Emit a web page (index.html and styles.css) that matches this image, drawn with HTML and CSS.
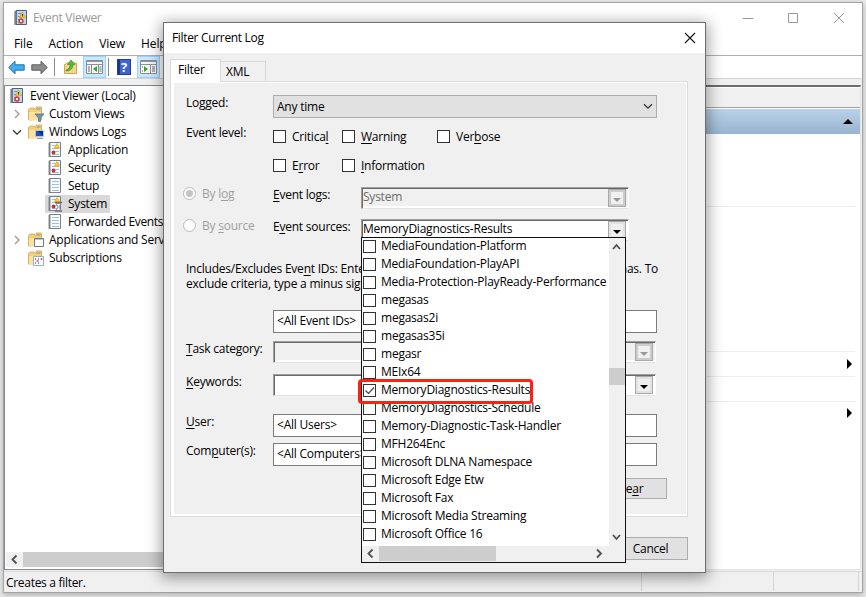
FILE: index.html
```
<!DOCTYPE html>
<html lang="en">
<head>
    <meta charset="UTF-8">
    <title>Event Viewer</title>
    <link rel="stylesheet" href="styles.css">
</head>
<body>
    <!-- icons -->
    <svg class="defs" width="0" height="0">
        <symbol id="i-book" viewBox="0 0 16 16">
            <path d="M3 .5h10.500v14H3z" fill="#bcd6f0" stroke="#4d6285"/>
            <path d="M5 3.500h4M5 6.500h3M5 9.500h2M5 12.500h2" stroke="#7793b5"/>
            <path d="M1 2h3M1 4h3M1 6h3M1 8h3M1 10h3M1 12h3M1 14h3" stroke="#555"/>
            <path d="M9.500 2l3 5.500h-6z" fill="#fbd12c" stroke="#c39a14" stroke-width=".6"/>
            <path d="M9.500 4v2.500" stroke="#333"/>
            <circle cx="8" cy="11" r="2.700" fill="#d5402f"/>
            <path d="M7 10l2 2M9 10l-2 2" stroke="#fff" stroke-width=".9"/>
        </symbol>
        <symbol id="i-page" viewBox="0 0 16 16">
            <path d="M2.500 .5h11v14h-11z" fill="#f8fbfd" stroke="#77818d"/>
            <path d="M5 3.500h7M5 6.500h7M5 9.500h7M5 12.500h7" stroke="#a3bdd3"/>
            <path d="M1 2h3M1 4h3M1 6h3M1 8h3M1 10h3M1 12h3M1 14h3" stroke="#777" stroke-width=".8"/>
        </symbol>
        <symbol id="i-log" viewBox="0 0 16 16">
            <use href="#i-page"/>
            <path d="M10 1.500l2.600 4.500H7.400z" fill="#fbd12c" stroke="#d2a313" stroke-width=".6"/>
            <circle cx="6.500" cy="10.500" r="1.900" fill="#c43434"/>
        </symbol>
        <symbol id="i-system" viewBox="0 0 16 16">
            <use href="#i-log"/>
            <path d="M8 6.500h7M8 15h7" stroke="#a35b31" stroke-width="1.400"/>
            <path d="M9 7.500h5L12 11l2 3.500H9l2-3.500z" fill="#e4f4ff" stroke="#5687b1" stroke-width=".8"/>
        </symbol>
        <symbol id="i-folder" viewBox="0 0 16 16">
            <path d="M.5 14V3.500L2 2h4l1.500 1.500H8V1h5.500v12.500z" fill="#f3cf79" stroke="#d2a548" stroke-width=".8"/>
            <path d="M1 6h12v8H1z" fill="#fbe2a0"/>
            <path d="M9 3h3.500" stroke="#5b9bd5"/>
        </symbol>
        <symbol id="i-back" viewBox="0 0 17 15">
            <path d="M.8 7.500L7 1.200v3.600h9.200v5.400H7v3.600z"/>
        </symbol>
        <symbol id="i-forward" viewBox="0 0 17 15">
            <path d="M16.200 7.500L10 1.200v3.600H.8v5.400H10v3.600z"/>
        </symbol>
        <symbol id="i-right" viewBox="0 0 8 10"><path d="M2 1l4 4-4 4" fill="none" stroke="currentColor" stroke-width="1.300"/></symbol>
        <symbol id="i-down" viewBox="0 0 10 7"><path d="M1 1.200l4 4 4-4" fill="none" stroke="currentColor" stroke-width="1.300"/></symbol>
    </svg>

    <div class="window">
        <div class="title-bar">
            <svg class="title-icon" width="16" height="16"><use href="#i-book"/></svg>
            <span>Event Viewer</span>
            <svg class="win-btns" width="104" height="12" fill="none" stroke="#999">
                <path d="M0 6.500h10M45.500 1.500h9v9h-9zM91 1l10 10M101 1L91 11"/>
            </svg>
        </div>
        <div class="menu">
            <span>File</span><span>Action</span><span>View</span><span>Help</span>
        </div>
        <div class="toolbar">
            <svg class="t-back" width="17" height="15" fill="#3fb0ec" stroke="#2b6fa8"><use href="#i-back"/></svg>
            <svg class="t-forward" width="17" height="15" fill="#8b8b8b" stroke="#5f5f5f"><use href="#i-forward"/></svg>
            <i class="sep"></i>
            <svg class="t-folder" width="16" height="16" viewBox="0 0 16 16">
                <path d="M1.500 14.500v-9h1l1-1.500h10v10.500z" fill="#f5d78c" stroke="#d0a54c"/>
                <path d="M3 11C6 10 7 8.500 7 5.500H4.500L8 1l4 4.500h-2C10 9.500 7.500 12 3 12z" fill="#4fbd38" stroke="#2a8520" stroke-width=".6"/>
            </svg>
            <span class="t-on">
                <svg width="17" height="14" viewBox="0 0 17 14">
                    <path d="M.5 .5h16v13H.5z" fill="#f7f7f7" stroke="#888e96"/>
                    <path d="M1 1.500h15M1 4.500h15" stroke="#8d949c"/>
                    <path d="M5.500 5v8M12.500 5v8" stroke="#888e96"/>
                    <path d="M2 7h2M2 9h2M2 11h2M13.500 7h2M13.500 9h2M13.500 11h2" stroke="#668"/>
                    <path d="M11 6v6L7 9z" fill="#37a528"/>
                </svg>
            </span>
            <i class="sep sep-near"></i>
            <span class="t-help">?</span>
            <span class="t-on">
                <svg width="17" height="14" viewBox="0 0 17 14">
                    <path d="M.5 .5h16v13H.5z" fill="#f7f7f7" stroke="#888e96"/>
                    <path d="M1 1.500h15M1 4.500h15" stroke="#8d949c"/>
                    <path d="M10.500 5v8" stroke="#888e96"/>
                    <path d="M12 7h3M12 9h3M12 11h3M2 7h1M2 11h1" stroke="#668"/>
                    <path d="M4 6v6l4-3z" fill="#37a528"/>
                </svg>
            </span>
        </div>
        <div class="main">
            <div class="tree-pane">
                <ul class="tree">
                    <li class="root"><svg class="ico" width="16" height="16"><use href="#i-book"/></svg><span>Event Viewer (Local)</span></li>
                    <li class="l1">
                        <svg class="tog" width="8" height="10"><use href="#i-right"/></svg>
                        <svg class="ico" width="17" height="16" viewBox="0 0 17 16"><use href="#i-folder" width="16" height="16"/><path d="M7 8h9l-3.500 4v3.500h-2V12z" fill="#7594ad" stroke="#49657d" stroke-width=".7"/></svg>
                        <span>Custom Views</span>
                    </li>
                    <li class="l1">
                        <svg class="tog open" width="10" height="7"><use href="#i-down"/></svg>
                        <svg class="ico" width="17" height="16" viewBox="0 0 17 16"><use href="#i-folder" width="16" height="16"/><path d="M7.500 6.500h8v6h-8z" fill="#1d4fc4" stroke="#b8c6d6"/><path d="M10 7h5v5z" fill="#0a2d8c"/><path d="M9 14.500h6" stroke="#8a98a8"/></svg>
                        <span>Windows Logs</span>
                    </li>
                    <li class="l2"><svg class="ico" width="16" height="16"><use href="#i-log"/></svg><span>Application</span></li>
                    <li class="l2"><svg class="ico" width="16" height="16"><use href="#i-log"/></svg><span>Security</span></li>
                    <li class="l2"><svg class="ico" width="16" height="16"><use href="#i-page"/></svg><span>Setup</span></li>
                    <li class="l2 on"><svg class="ico" width="16" height="16"><use href="#i-system"/></svg><span>System</span></li>
                    <li class="l2 tight"><svg class="ico" width="16" height="16"><use href="#i-page"/></svg><span>Forwarded Events</span></li>
                    <li class="l1">
                        <svg class="tog" width="8" height="10"><use href="#i-right"/></svg>
                        <svg class="ico" width="17" height="16" viewBox="0 0 17 16"><use href="#i-folder" width="16" height="16"/><path d="M6.500 6.500h9v8h-9z" fill="#fff" stroke="#6d7d8d"/><path d="M7 7.500h8" stroke="#b8c8d8"/></svg>
                        <span>Applications and Services Logs</span>
                    </li>
                    <li class="l1">
                        <i class="tog"></i>
                        <svg class="ico" width="17" height="16" viewBox="0 0 17 16"><use href="#i-folder" width="16" height="16"/><path d="M5.500 6.500h10v9h-10z" fill="#fff" stroke="#9aabbb"/><path d="M7 9h1M10 9h1M7 13h1M10 13h1" stroke="#346fc0" stroke-width="1.500"/><path d="M12.500 9h2M8.500 11h2" stroke="#d14a3d" stroke-width="1.500"/></svg>
                        <span>Subscriptions</span>
                    </li>
                </ul>
                <div class="h-scroll">
                    <svg width="17" height="15" fill="none" stroke="#505050" stroke-width="1.800"><path d="M10.500 3.500l-4 4 4 4"/></svg>
                    <i></i>
                </div>
            </div>
            <div class="actions">
                <div class="actions-head"></div>
                <div class="actions-title"><i class="tri-up"></i></div>
                <div class="act a1"></div>
                <div class="act a2"></div>
                <div class="act a3"><i class="tri-right"></i></div>
                <div class="act a4"></div>
                <div class="act a5"><i class="tri-right"></i></div>
            </div>
        </div>
        <div class="status"><span>Creates a filter.</span><i></i><i></i></div>
    </div>

    <div class="dialog">
        <div class="dialog-title">
            <span>Filter Current Log</span>
            <svg width="12" height="12" stroke="#111" stroke-width="1.100"><path d="M1 1l10 10M11 1L1 11"/></svg>
        </div>
        <div class="tabs">
            <span class="tab active">Filter</span><span class="tab">XML</span>
        </div>
        <div class="panel">
            <div class="form">
                <div class="row r-logged">
                    <label>Lo<u>g</u>ged:</label>
                    <div class="select"><span>Any time</span><svg width="10" height="7"><use href="#i-down"/></svg></div>
                </div>
                <div class="row r-level">
                    <label>Event level:</label>
                    <div class="checks">
                        <span><i class="box"></i>Critica<u>l</u></span>
                        <span><i class="box"></i><u>W</u>arning</span>
                        <span><i class="box"></i>Ver<u>b</u>ose</span>
                        <span><i class="box"></i>E<u>r</u>ror</span>
                        <span class="w-info"><i class="box"></i><u>I</u>nformation</span>
                    </div>
                </div>
                <div class="row r-source">
                    <label class="radio"><i class="on"></i><span>By l<u>o</u>g</span></label>
                    <label class="sub"><u>E</u>vent logs:</label>
                    <div class="combo off"><span>System</span><b></b></div>
                </div>
                <div class="row r-source r-source2">
                    <label class="radio"><i></i><span>By <u>s</u>ource</span></label>
                    <label class="sub">E<u>v</u>ent sources:</label>
                    <div class="combo"><span>MemoryDiagnostics-Results</span><b></b></div>
                </div>
                <div class="note">
                    <p><span>Includes/Excludes Eve<u>n</u>t IDs: Enter ID</span><span>commas. To</span></p>
                    <p><span>exclude criteria, type a minus sign first.</span></p>
                </div>
                <div class="row r-ids"><label></label><div class="input">&lt;All Event IDs&gt;</div></div>
                <div class="row r-task"><label><u>T</u>ask category:</label><div class="combo wide off"><span></span><b></b></div></div>
                <div class="row r-key"><label><u>K</u>eywords:</label><div class="combo wide"><span></span><b></b></div></div>
                <div class="row r-user"><label><u>U</u>ser:</label><div class="input">&lt;All Users&gt;</div></div>
                <div class="row r-comp"><label>Com<u>p</u>uter(s):</label><div class="input">&lt;All Computers&gt;</div></div>
                <div class="btn clear"><span>Cle<u>a</u>r</span></div>
            </div>
        </div>
        <div class="btn cancel"><span>Cancel</span></div>

        <!-- event sources list -->
        <div class="drop">
            <ul>
                <li><i class="box"></i>MediaFoundation-Platform</li>
                <li><i class="box"></i>MediaFoundation-PlayAPI</li>
                <li><i class="box"></i>Media-Protection-PlayReady-Performance</li>
                <li><i class="box"></i>megasas</li>
                <li><i class="box"></i>megasas2i</li>
                <li><i class="box"></i>megasas35i</li>
                <li><i class="box"></i>megasr</li>
                <li><i class="box"></i>MEIx64</li>
                <li><i class="box"><svg width="11" height="11" fill="none" stroke="#444" stroke-width="1.200"><path d="M1.500 5.500l3 3 5.500-6"/></svg></i>MemoryDiagnostics-Results</li>
                <li><i class="box"></i>MemoryDiagnostics-Schedule</li>
                <li><i class="box"></i>Memory-Diagnostic-Task-Handler</li>
                <li><i class="box"></i>MFH264Enc</li>
                <li><i class="box"></i>Microsoft DLNA Namespace</li>
                <li><i class="box"></i>Microsoft Edge Etw</li>
                <li><i class="box"></i>Microsoft Fax</li>
                <li><i class="box"></i>Microsoft Media Streaming</li>
                <li><i class="box"></i>Microsoft Office 16</li>
            </ul>
            <div class="v-bar">
                <svg width="16" height="17" fill="none" stroke="#505050" stroke-width="1.800"><path d="M4 11l3.500-4 3.500 4"/></svg>
                <i></i>
                <svg width="16" height="17" fill="none" stroke="#505050" stroke-width="1.800"><path d="M4 6l3.500 4L11 6"/></svg>
            </div>
            <div class="h-bar">
                <svg width="17" height="15" fill="none" stroke="#505050" stroke-width="1.800"><path d="M10.500 3.500l-4 4 4 4"/></svg>
                <i></i>
                <svg width="17" height="15" fill="none" stroke="#505050" stroke-width="1.800"><path d="M6 3.500l4 4-4 4"/></svg>
            </div>
        </div>
        <div class="mark"></div>
    </div>
</body>
</html>
```
FILE: styles.css
```
*{
    margin: 0;
    padding: 0;
    box-sizing: border-box;
}
body{
    width: 866px;
    height: 597px;
    overflow: hidden;
    background-color: #e9e9e9;
    font: 12px/16px "Open Sans", "Noto Sans", sans-serif;
    letter-spacing: -0.23px;
    color: #000;
    white-space: nowrap;
}
ul{
    list-style: none;
}
svg{
    display: block;
    flex: none;
}
u{
    text-underline-offset: 2px;
    text-decoration-thickness: 1px;
}
.defs{
    position: absolute;
}

/* main window */
.window{
    display: flex;
    flex-direction: column;
    width: 860px;
    height: 591px;
    margin: 2px 0 0 3px;
    border: 1px solid #a3a3a3;
    background-color: #f0f0f0;
    box-shadow: 0 2px 6px rgba(0,0,0,.25);
}
.title-bar{
    display: flex;
    align-items: center;
    height: 30px;
    padding: 0 15px 0 9px;
    background-color: #fff;
    color: #999;
}
.title-bar span{
    letter-spacing: -.3px;
}
.title-icon{
    margin-right: 4px;
}
.win-btns{
    margin-left: auto;
}
.menu{
    display: flex;
    gap: 16px;
    height: 22px;
    padding: 3px 0 0 10px;
    background-color: #fff;
    letter-spacing: -.1px;
}
.toolbar{
    display: flex;
    align-items: center;
    height: 24px;
    padding-left: 4px;
    background-color: #fff;
    border-top: 1px solid #b0b0b4;
    border-bottom: 1px solid #d5d5d5;
}
.t-forward{
    margin-left: 6px;
}
.sep{
    width: 1px;
    height: 18px;
    margin: 0 8px 0 6px;
    background-color: #8b8b8b;
}
.sep-near{
    margin: 0 8px 0 2px;
}
.t-on{
    display: flex;
    align-items: center;
    justify-content: center;
    width: 23px;
    height: 22px;
    margin-left: 4px;
    background-color: #cce8ff;
    border: 1px solid #99d1ff;
}
.t-help{
    width: 14px;
    height: 16px;
    margin-right: 2px;
    background: linear-gradient(90deg, #1d3689 2px, #3f66cc 2px);
    border: 1px solid #203c8d;
    color: #fff;
    font-weight: bold;
    font-size: 13px;
    line-height: 14px;
    text-align: center;
}
.main{
    display: flex;
    justify-content: space-between;
    height: 485px;
    margin-top: 6px;
}

/* tree */
.tree-pane{
    display: flex;
    flex-direction: column;
    justify-content: space-between;
    width: 300px;
    padding: 1px 0 2px 1px;
    background-color: #fff;
    border: 1px solid #828790;
}
.tree li{
    display: flex;
    align-items: center;
    height: 18px;
}
.tree .root{
    padding-left: 3px;
    letter-spacing: -.28px;
}
.tree .root span{
    padding-left: 5px;
}
.tree .l1{
    padding-left: 6px;
}
.tog{
    width: 8px;
    margin: 0 8px 0 1px;
    color: #999;
}
.tog.open{
    width: 10px;
    margin: 0 7px 0 0;
    color: #333;
}
.l1 .ico{
    margin: 0 4px 0 -1px;
}
.l2{
    width: max-content;
    margin-left: 39px;
    padding: 0 3px 0 2px;
}
.l2 span{
    padding-left: 5px;
}
.l2.tight{
    letter-spacing: -.33px;
}
.l2.on{
    background-color: #d9d9d9;
}
.h-scroll{
    display: flex;
    height: 15px;
    background-color: #f0f0f0;
}
.h-scroll i{
    width: 200px;
    background-color: #cdcdcd;
}

/* actions on the right */
.actions{
    width: 240px;
    margin-right: 1px;
    background-color: #fff;
    border-top: 2px solid #6c6c6c;
    border-right: 1px solid #e3e3e3;
    border-bottom: 1px solid #e3e3e3;
}
.actions-head{
    height: 21px;
    border-top: 1px solid #fff;
    border-bottom: 1px solid #a0a0a0;
    background-color: #f0f0f0;
}
.actions-title{
    display: flex;
    align-items: center;
    justify-content: flex-end;
    height: 25px;
    margin-top: 1px;
    padding-right: 7px;
    background: linear-gradient(#b9d1ea, #99b4d1);
}
.tri-up{
    border: 5px solid transparent;
    border-top: 0;
    border-bottom-color: #000;
}
.act{
    display: flex;
    align-items: center;
    justify-content: flex-end;
    height: 25px;
    margin-right: 5px;
    padding-right: 3px;
    border-bottom: 1px solid #ededed;
}
.a1{
    height: 73px;
}
.a2{
    height: 145px;
}
.a5{
    height: 23px;
    border-bottom: 0;
}
.tri-right{
    margin-bottom: 1px;
    border: 5px solid transparent;
    border-right: 0;
    border-left-color: #000;
}
.status{
    display: flex;
    height: 21px;
    margin-top: 1px;
    padding: 0 3px 1px 2px;
    border-top: 1px solid #d9d9d9;
}
.status span{
    width: 636px;
    line-height: 21px;
    letter-spacing: -.3px;
}
.status i{
    height: 19px;
    width: 133px;
    border-left: 1px solid #d5d5d5;
}
.status i:last-child{
    width: 86px;
    border-right: 1px solid #d5d5d5;
}

/* filter dialog */
.dialog{
    position: absolute;
    top: 22px;
    left: 163px;
    width: 543px;
    height: 551px;
    border: 1px solid #6e6e6e;
    background-color: #f0f0f0;
    box-shadow: 0 3px 14px 2px rgba(0,0,0,.38);
}
.dialog-title{
    display: flex;
    align-items: center;
    justify-content: space-between;
    height: 30px;
    padding: 0 9px 1px 8px;
    background-color: #fff;
}
.dialog-title span{
    padding-top: 1px;
    letter-spacing: -.33px;
}
.tabs{
    display: flex;
    align-items: flex-end;
    height: 29px;
    padding: 6px 0 0 6px;
}
.tab{
    width: 45px;
    height: 21px;
    padding: 2px 5px;
    border: 1px solid #d9d9d9;
    border-width: 1px 1px 0 0;
}
.tab.active{
    width: 51px;
    height: 23px;
    padding: 2px 0 0 7px;
    border-width: 1px 1px 0 1px;
    background-color: #fff;
}
.panel{
    width: 518px;
    height: 436px;
    margin: -1px 0 0 6px;
    padding: 1px 1px 2px 3px;
    background-color: #fff;
    border: 1px solid #dcdcdc;
}
.form{
    display: flex;
    flex-direction: column;
    height: 431px;
    padding: 12px 28px 0 12px;
    background-color: #f0f0f0;
}
.row{
    display: flex;
    height: 23px;
}
.row label{
    width: 87px;
    flex: none;
}
.select{
    display: flex;
    align-items: center;
    justify-content: space-between;
    width: 384px;
    height: 23px;
    padding: 0 3px;
    background-color: #e1e1e1;
    border: 1px solid #adadad;
    color: #333;
}
.select span{
    color: #000;
}
.r-level{
    height: 57px;
    margin-top: 7px;
}
.checks{
    display: grid;
    grid-template-columns: 69px 95px 100px;
    grid-template-rows: 29px 16px;
    padding-top: 4px;
}
.checks span{
    display: flex;
    height: 16px;
}
.checks .box{
    margin-top: 1px;
}
.w-info{
    letter-spacing: -.26px;
}
.box{
    flex: none;
    width: 13px;
    height: 13px;
    margin: 2px 6px 0 0;
    background-color: #fff;
    border: 1px solid #333;
}
.r-source{
    margin-top: 5px;
    height: 22px;
}
.r-source2{
    margin-top: 10px;
}
.row .radio{
    display: flex;
    color: #a0a0a0;
    margin: -1px 0 0 -3px;
    width: 90px;
}
.radio i{
    width: 13px;
    height: 13px;
    margin: 1px 6px 0 0;
    border: 1px solid #bcbcbc;
    border-radius: 50%;
    background-color: #fff;
}
.radio i.on{
    background: radial-gradient(circle, #c4c4c4 3px, #fff 4px);
}
.row .sub{
    width: 88px;
}
.combo{
    display: flex;
    justify-content: space-between;
    width: 268px;
    height: 22px;
    border: 1px solid #a0a0a0;
    border-color: #a0a0a0 #fff #e3e3e3 #a0a0a0;
    box-shadow: inset 1px 1px 0 #696969, inset 0 -1px 0 #fff;
    background-color: #fff;
    padding: 1px 2px 1px 1px;
}
.combo.off{
    background-color: #f0f0f0;
    box-shadow: inset 1px 1px 0 #696969, inset 0 -2px 0 #fff;
    color: #6d6d6d;
}
.combo.wide{
    width: 383px;
}
.combo b{
    display: flex;
    align-items: center;
    justify-content: center;
    width: 18px;
    height: 18px;
    background-color: #f0f0f0;
    border: 1px solid #a9a9a9;
    box-shadow: inset 0 0 0 2px #e2e2e2;
}
.combo b:after{
    content: "";
    margin-top: 3px;
    border: 4px solid transparent;
    border-bottom: 0;
    border-top-color: #000;
}
.combo.off b{
    box-shadow: inset 0 0 0 2px #ccc;
}
.combo.off b:after{
    border-top-color: #999;
}
.note{
    margin-top: 20px;
    line-height: 15px;
}
.note p{
    display: flex;
    justify-content: space-between;
}
.r-ids{
    margin-top: 19px;
}
.input{
    width: 384px;
    height: 23px;
    padding: 2px 3px;
    background-color: #fff;
    border: 1px solid #7a7a7a;
}
.r-task{
    height: 22px;
    margin-top: 8px;
}
.r-key{
    height: 22px;
    margin-top: 11px;
}
.r-user{
    margin-top: 18px;
}
.r-comp{
    margin-top: 6px;
}
.btn{
    display: flex;
    align-items: center;
    justify-content: center;
    background-color: #e1e1e1;
    border: 1px solid #adadad;
}
.clear{
    flex: none;
    width: 75px;
    height: 21px;
    margin: 12px 0 0 406px;
}
.cancel{
    width: 75px;
    height: 23px;
    margin: 20px 0 0 449px;
}

/* opened list */
.drop{
    position: absolute;
    top: 214px;
    left: 197px;
    display: grid;
    grid-template-columns: 247px 16px;
    grid-template-rows: 308px 16px;
    width: 265px;
    height: 326px;
    background-color: #f0f0f0;
    border: 1px solid #111;
}
.drop ul{
    overflow: hidden;
    background-color: #fff;
}
.drop li{
    display: flex;
    height: 18px;
    padding-left: 1px;
}
.drop .box{
    margin: 2px 5px 0 0;
}
.v-bar{
    display: flex;
    flex-direction: column;
}
.v-bar i{
    height: 17px;
    margin: 113px 0 144px;
    background-color: #cdcdcd;
}
.h-bar{
    display: flex;
}
.h-bar i{
    width: 117px;
    height: 15px;
    margin-right: 95px;
    background-color: #cdcdcd;
}
.mark{
    position: absolute;
    top: 356px;
    left: 194px;
    width: 175px;
    height: 25px;
    border: 3px solid #ff2015;
    border-radius: 4px;
}
```
